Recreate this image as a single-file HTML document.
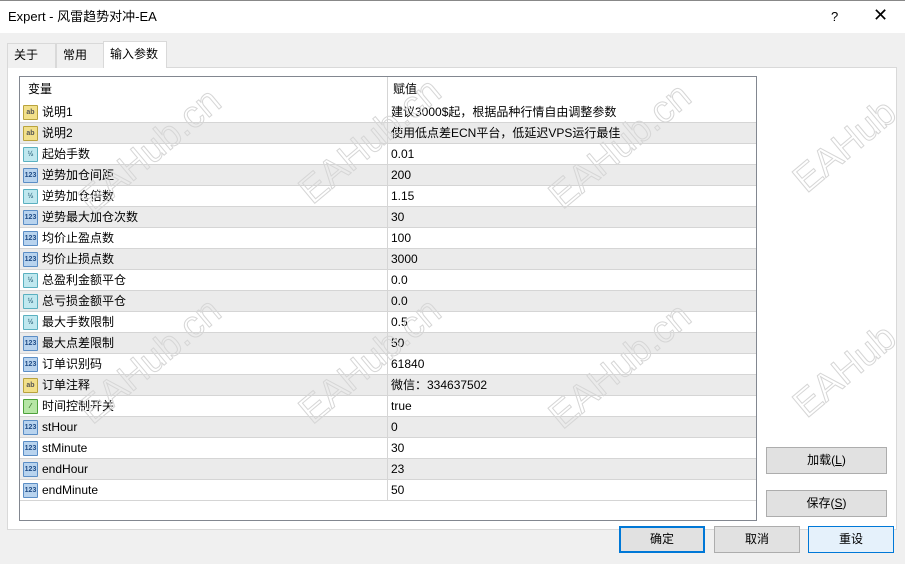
<!DOCTYPE html><html><head><meta charset="utf-8"><style>
*{margin:0;padding:0;box-sizing:border-box}
body{width:905px;height:564px;background:#f0f0f0;font-family:"Liberation Sans","Noto Sans CJK SC",sans-serif;font-size:12px;color:#000;position:relative;overflow:hidden}
.title{position:absolute;left:0;top:0;width:905px;height:33px;background:#fff;border-top:1px solid #888}
.title span{position:absolute;top:8px;font-size:13px;line-height:16px}
.tab{position:absolute;top:43px;height:25px;border:1px solid #d9d9d9;border-bottom:none;background:#f0f0f0;padding:0 6px;line-height:23px}
.panel{position:absolute;left:7px;top:67px;width:890px;height:463px;background:#fff;border:1px solid #d9d9d9}
.tbl{position:absolute;left:19px;top:76px;width:738px;height:445px;border:1px solid #828790;background:#fff}
.row{position:absolute;left:0;width:736px;height:21px;border-bottom:1px solid #d5d5d5;line-height:20px}
.row.g{background:#ebebeb}
.row .n{position:absolute;left:22px;top:0}
.row .v{position:absolute;left:371px;top:0}
.row .d{position:absolute;left:367px;top:0;width:1px;height:21px;background:#d5d5d5}
.ic{position:absolute;left:3px;top:3px;width:15px;height:15px;border-radius:1px;font-size:7px;line-height:13px;text-align:center;font-weight:bold}
.ab{background:#f2e08a;border:1px solid #b9a33d;color:#555}
.hf{background:#bfe8ef;border:1px solid #5ab0c0;color:#3a6f85}
.nm{background:#b8d3ee;border:1px solid #5b8ec6;color:#1f4c86}
.bl{background:#b6e6a5;border:1px solid #4ea23b;color:#2a6a1f}
.btn{position:absolute;height:27px;background:#e1e1e1;border:1px solid #adadad;text-align:center;line-height:25px}
.wm{position:absolute;font-size:38px;color:transparent;-webkit-text-stroke:1px #d6d6d6;transform:rotate(-40deg);font-family:"Liberation Sans",sans-serif}
</style></head><body>
<div class="title"><span style="left:8px">Expert - 风雷趋势对冲-EA</span><span style="left:831px">?</span><span style="left:873px;font-size:18px;top:6px">✕</span></div>
<div class="panel"></div>
<div class="tab" style="left:7px;width:49px">关于</div>
<div class="tab" style="left:56px;width:48px">常用</div>
<div class="tab" style="left:103px;top:41px;height:27px;width:64px;background:#fff;line-height:25px">输入参数</div>
<div class="tbl">
<div class="row" style="top:0;height:25px;border:none;line-height:25px"><span class="n" style="left:8px">变量</span><span class="v" style="left:373px">赋值</span><div class="d" style="height:25px"></div></div>
<div id="rows"></div>
</div>
<div class="wm" style="left:65px;top:130px">EAHub.cn</div>
<div class="wm" style="left:285px;top:120px">EAHub.cn</div>
<div class="wm" style="left:535px;top:125px">EAHub.cn</div>
<div class="wm" style="left:785px;top:125px">EAHub</div>
<div class="wm" style="left:65px;top:340px">EAHub.cn</div>
<div class="wm" style="left:285px;top:340px">EAHub.cn</div>
<div class="wm" style="left:535px;top:345px">EAHub.cn</div>
<div class="wm" style="left:785px;top:350px">EAHub</div>
<div class="btn" style="left:766px;top:447px;width:121px">加载(<u>L</u>)</div>
<div class="btn" style="left:766px;top:490px;width:121px">保存(<u>S</u>)</div>
<div class="btn" style="left:619px;top:526px;width:86px;border:2px solid #0078d7;line-height:23px">确定</div>
<div class="btn" style="left:714px;top:526px;width:86px">取消</div>
<div class="btn" style="left:808px;top:526px;width:86px;background:#e5f1fb;border-color:#0078d7">重设</div>
<script>
var d=[["ab","说明1","建议3000$起，根据品种行情自由调整参数"],["ab","说明2","使用低点差ECN平台，低延迟VPS运行最佳"],["hf","起始手数","0.01"],["nm","逆势加仓间距","200"],["hf","逆势加仓倍数","1.15"],["nm","逆势最大加仓次数","30"],["nm","均价止盈点数","100"],["nm","均价止损点数","3000"],["hf","总盈利金额平仓","0.0"],["hf","总亏损金额平仓","0.0"],["hf","最大手数限制","0.5"],["nm","最大点差限制","50"],["nm","订单识别码","61840"],["ab","订单注释","微信：334637502"],["bl","时间控制开关","true"],["nm","stHour","0"],["nm","stMinute","30"],["nm","endHour","23"],["nm","endMinute","50"]];
var t={ab:"ab",hf:"½",nm:"123",bl:"⁄"},h="";
d.forEach(function(r,i){h+='<div class="row'+(i%2?' g':'')+'" style="top:'+(25+i*21)+'px"><div class="ic '+r[0]+'">'+t[r[0]]+'</div><span class="n">'+r[1]+'</span><div class="d"></div><span class="v">'+r[2]+'</span></div>'});
document.getElementById("rows").innerHTML=h;
</script>
</body></html>
